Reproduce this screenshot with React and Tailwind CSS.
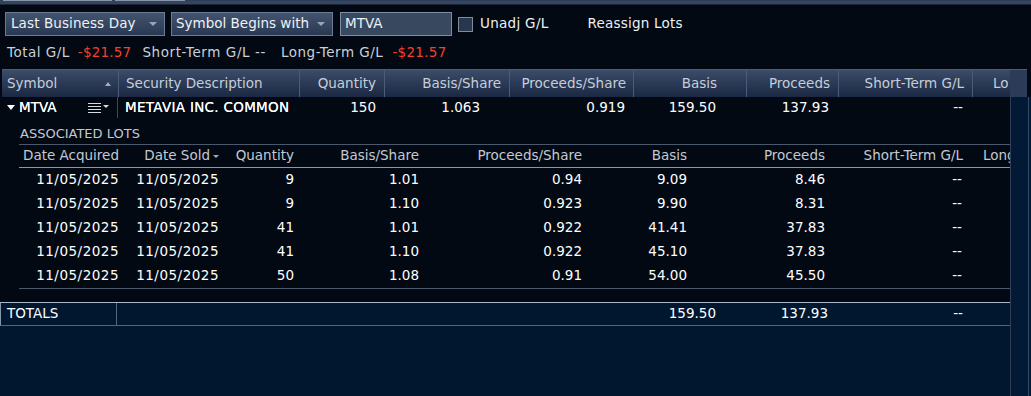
import React from "react";

const Caret = ({ className = "" }) => (
  <span className={"inline-block w-0 h-0 border-l-[4px] border-r-[4px] border-t-[4px] border-l-transparent border-r-transparent border-t-[#9aa6b6] " + className} />
);

const HDR = "grid grid-cols-[116px_181px_85px_125px_124px_113px_92px_134px_36px]";
const LOT = "grid grid-cols-[100px_100px_75px_125px_163px_105px_138px_138px_47px]";

const lots = [
  ["9", "1.01", "0.94", "9.09", "8.46"],
  ["9", "1.10", "0.923", "9.90", "8.31"],
  ["41", "1.01", "0.922", "41.41", "37.83"],
  ["41", "1.10", "0.922", "45.10", "37.83"],
  ["50", "1.08", "0.91", "54.00", "45.50"],
];

export default function App() {
  return (
    <div className="w-[1031px] h-[396px] overflow-hidden bg-[#020913] font-['DejaVu_Sans',sans-serif] text-[13.5px] leading-none text-white flex flex-col">
      {/* top chrome */}
      <div className="h-[5px] flex flex-col shrink-0">
        <div className="h-[1px] bg-[#2e3d58] flex">
          <div className="ml-[3px] w-[109px] bg-[#8a96a8]" />
          <div className="ml-[3px] w-[70px] bg-[#8a96a8]" />
        </div>
        <div className="h-[3px] bg-[#34455f]" />
        <div className="h-[1px] bg-[#1c2638]" />
      </div>

      {/* controls */}
      <div className="mt-[7px] h-[24px] flex items-center shrink-0 text-[#eef1f5]">
        <div className="ml-[5px] w-[160px] h-[24px] border border-[#6b7b93] bg-linear-to-b from-[#435470] to-[#2a3953] flex items-center justify-between pl-[5px] pr-[7px]">
          <span className="tracking-[0.1px]">Last Business Day</span>
          <Caret />
        </div>
        <div className="ml-[6px] w-[162px] h-[24px] border border-[#6b7b93] bg-linear-to-b from-[#435470] to-[#2a3953] flex items-center justify-between pl-[4px] pr-[7px]">
          <span>Symbol Begins with</span>
          <Caret />
        </div>
        <div className="ml-[7px] w-[112px] h-[24px] border border-[#7d8da3] bg-[#38485f] flex items-center pl-[4px]">
          <span>MTVA</span>
        </div>
        <div className="ml-[6px] w-[15px] h-[15px] border border-[#7e8c9e] bg-[#28374d]" />
        <span className="ml-[7px] tracking-[0.3px]">Unadj G/L</span>
        <span className="ml-[39px] tracking-[0.2px]">Reassign Lots</span>
      </div>

      {/* summary */}
      <div className="h-[33px] flex items-center shrink-0 text-[#c9d0d9]">
        <span className="ml-[7px] tracking-[0.5px]">Total G/L</span>
        <span className="ml-[8px] text-[#f5402a] tracking-[0.2px]">-$21.57</span>
        <span className="ml-[11px] tracking-[0.6px]">Short-Term G/L --</span>
        <span className="ml-[15px] tracking-[0.5px]">Long-Term G/L</span>
        <span className="ml-[9px] text-[#f5402a] tracking-[0.3px]">-$21.57</span>
      </div>

      {/* table */}
      <div className="flex flex-1 min-h-0">
        <div className="w-[1010px] flex flex-col">
          {/* header */}
          <div className={HDR + " ml-[2px] h-[28px] bg-linear-to-b from-[#3b4c69] to-[#1b2843] border-t border-[#4d5e7a] text-[#c6ced9] items-center"}>
            <div className="h-full flex items-center justify-between pl-[5px] pr-[7px]">
              <span>Symbol</span>
              <span className="inline-block w-0 h-0 border-l-[3px] border-r-[3px] border-b-[4px] border-l-transparent border-r-transparent border-b-[#a3adbb]" />
            </div>
            <div className="h-full flex items-center border-l border-[#4a5c7a] pl-[7px]">Security Description</div>
            <div className="h-full flex items-center justify-end border-l border-[#4a5c7a] pr-[8px]">Quantity</div>
            <div className="h-full flex items-center justify-end border-l border-[#4a5c7a] pr-[8px]">Basis/Share</div>
            <div className="h-full flex items-center justify-end border-l border-[#4a5c7a] pr-[7px]">Proceeds/Share</div>
            <div className="h-full flex items-center justify-end border-l border-[#4a5c7a] pr-[29px]">Basis</div>
            <div className="h-full flex items-center justify-end border-l border-[#4a5c7a] pr-[8px]">Proceeds</div>
            <div className="h-full flex items-center justify-end border-l border-[#4a5c7a] pr-[8px]">Short-Term G/L</div>
            <div className="h-full flex items-center border-l border-[#4a5c7a] pl-[20px] overflow-hidden whitespace-nowrap">Lo</div>
          </div>

          {/* MTVA row */}
          <div className={HDR + " ml-[2px] h-[21px] items-center"}>
            <div className="h-full flex items-center border-r border-[#3c4a5e] pl-[5px]">
              <span className="inline-block w-0 h-0 border-l-[4px] border-r-[4px] border-t-[5px] border-l-transparent border-r-transparent border-t-white" />
              <span className="ml-[4px] [text-shadow:0_0_0.4px_#fff]">MTVA</span>
              <svg className="ml-[31px]" width="13" height="10" viewBox="0 0 13 10">
                <path d="M0 0.5H13M0 3.5H13M0 6.5H13M0 9.5H13" stroke="#d6dbe3" strokeWidth="1" />
              </svg>
              <span className="ml-[2px] mb-[3px] inline-block w-0 h-0 border-l-[3px] border-r-[3px] border-t-[3px] border-l-transparent border-r-transparent border-t-[#d6dbe3]" />
            </div>
            <div className="pl-[7px] pr-[9px]">
              <div className="overflow-hidden whitespace-nowrap tracking-[0.3px] [text-shadow:0_0_0.3px_#fff]">METAVIA INC. COMMON</div>
            </div>
            <div className="text-right pr-[8px]">150</div>
            <div className="text-right pr-[29px]">1.063</div>
            <div className="text-right pr-[8px]">0.919</div>
            <div className="text-right pr-[30px]">159.50</div>
            <div className="text-right pr-[9px]">137.93</div>
            <div className="text-right pr-[9px]">--</div>
            <div />
          </div>

          {/* associated lots label */}
          <div className="h-[26px] flex items-center pt-[4px] pl-[20px] text-[#c2c9d2] text-[13px]">ASSOCIATED LOTS</div>

          {/* lots table */}
          <div className="ml-[19px] border-t border-b border-[#4a586c]">
            <div className={LOT + " h-[23px] items-center border-b border-[#8c97a6] text-[#c2c9d2]"}>
              <div className="text-right">Date Acquired</div>
              <div className="flex items-center justify-end">
                <span>Date Sold</span>
                <span className="ml-[3px] inline-block w-0 h-0 border-l-[3px] border-r-[3px] border-t-[3px] border-l-transparent border-r-transparent border-t-[#a3abb7]" />
              </div>
              <div className="text-right">Quantity</div>
              <div className="text-right">Basis/Share</div>
              <div className="text-right">Proceeds/Share</div>
              <div className="text-right">Basis</div>
              <div className="text-right">Proceeds</div>
              <div className="text-right">Short-Term G/L</div>
              <div className="pl-[20px] overflow-hidden whitespace-nowrap">Long</div>
            </div>
            {lots.map((r, i) => (
              <div key={i} className={LOT + " h-[24px] items-center"}>
                <div className="text-right tracking-[0.5px]">11/05/2025</div>
                <div className="text-right tracking-[0.5px]">11/05/2025</div>
                <div className="text-right">{r[0]}</div>
                <div className="text-right">{r[1]}</div>
                <div className="text-right">{r[2]}</div>
                <div className="text-right">{r[3]}</div>
                <div className="text-right">{r[4]}</div>
                <div className="text-right pr-[1px]">--</div>
                <div />
              </div>
            ))}
          </div>

          <div className="h-[13px]" />

          {/* totals */}
          <div className="flex-1 bg-[#011730] flex flex-col">
            <div className={HDR + " h-[24px] items-center border-t border-b border-t-[#a9b8cc] border-b-[#56647a] border-l border-l-[#8796ab]"}>
              <div className="h-full flex items-center border-r border-[#56647a] pl-[6px]">TOTALS</div>
              <div />
              <div />
              <div />
              <div />
              <div className="text-right pr-[29px]">159.50</div>
              <div className="text-right pr-[9px]">137.93</div>
              <div className="text-right pr-[8px]">--</div>
              <div />
            </div>
          </div>
        </div>

        {/* scrollbar strip */}
        <div className="flex-1 flex flex-col">
          <div className="h-[28px] bg-[#2c3b58] border-t border-[#4d5e7a] w-[17px]" />
          <div className="flex-1 flex">
            <div className="w-[18px] bg-[#031a36] border-l border-[#2f3e55]" />
            <div className="w-[1px] bg-[#3a4a62]" />
            <div className="flex-1 bg-[#031a36]" />
          </div>
        </div>
      </div>
    </div>
  );
}
